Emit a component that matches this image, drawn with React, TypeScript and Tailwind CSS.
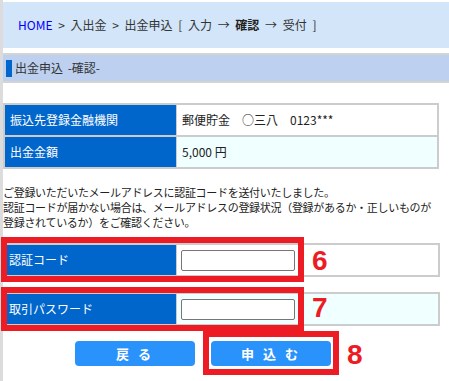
const font = "font-['Noto_Sans_CJK_JP',sans-serif]";

const InfoRow = ({ label, value, alt }: { label: string; value: string; alt?: boolean }) => (
  <div className="flex h-[30px] gap-x-px">
    <div className="w-[171px] bg-[#0066cc] text-white flex items-center pl-[5px]">{label}</div>
    <div className={`flex-1 flex items-center pl-[5px] text-[#222] ${alt ? "bg-[#f0ffff]" : "bg-white"}`}>
      {value}
    </div>
  </div>
);

const FormRow = ({ label, alt, type }: { label: string; alt?: boolean; type: string }) => (
  <div className="ml-[2px] w-[435px] border-2 border-[#cccccc] flex h-[34px]">
    <div className="w-[169px] bg-[#0066cc] text-white flex items-center pl-[2px]">{label}</div>
    <div className="w-px bg-[#cccccc]" />
    <div className={`flex-1 flex items-center pl-[4px] ${alt ? "bg-[#f0ffff]" : "bg-white"}`}>
      <input
        type={type}
        className="w-[114px] h-[21px] border border-[#767676] rounded-[2px] bg-white outline-none"
      />
    </div>
  </div>
);

const RedNum = ({ n, className }: { n: string; className: string }) => (
  <div
    className={`absolute text-[28px] leading-none font-bold text-[#ed1c24] font-['Liberation_Sans',Arial,sans-serif] ${className}`}
  >
    {n}
  </div>
);

export default function App() {
  return (
    <div className={`relative flex w-[449px] h-[381px] overflow-hidden bg-white text-[12px] ${font}`}>
      <div className="w-[3px] bg-[#dcdcdc] shrink-0" />
      <div className="flex-1 flex flex-col pt-[2px]">
        <div className="h-[46px] bg-[#d2e5f9] flex items-center pl-[15px] text-[#333] [word-spacing:3px] whitespace-pre">
          <span className="text-[#0000ff]">HOME</span>
          <span> &gt; 入出金 &gt; 出金申込 [ 入力 → </span>
          <span className="font-bold text-[#222]">確認</span>
          <span> → 受付 ]</span>
        </div>

        <div className="mt-[5px] h-[30px] border-y-2 border-[#d4d4d4] bg-[#bdd0ef] flex items-center">
          <div className="ml-[3px] w-[6px] h-[17px] bg-[#0066cc]" />
          <div className="ml-[3px] text-[#333] [word-spacing:2px]">出金申込 -確認-</div>
        </div>

        <div className="mt-[20px] w-[436px] border-2 border-[#cccccc] bg-[#cccccc] flex flex-col gap-y-[2px]">
          <InfoRow label="振込先登録金融機関" value="郵便貯金　○三八　0123***" />
          <InfoRow label="出金金額" value="5,000 円" alt />
        </div>

        <p className="mt-[16px] text-[11px] leading-[15px] tracking-[-0.3px] text-[#222] whitespace-nowrap">
          ご登録いただいたメールアドレスに認証コードを送付いたしました。
          <br />
          認証コードが届かない場合は、メールアドレスの登録状況（登録があるか・正しいものが
          <br />
          登録されているか）をご確認ください。
        </p>

        <div className="mt-[13px]">
          <FormRow label="認証コード" type="text" />
        </div>
        <div className="mt-[15px]">
          <FormRow label="取引パスワード" type="password" alt />
        </div>

        <div className="mt-[15px] ml-[72px] flex gap-[16px]">
          <button className="w-[120px] h-[25px] rounded-[4px] bg-[#2a93fb] text-white font-bold text-[13px] tracking-[3px]">
            戻 る
          </button>
          <button className="w-[120px] h-[25px] rounded-[4px] bg-[#2a93fb] text-white font-bold text-[13px] tracking-[3px]">
            申 込 む
          </button>
        </div>
      </div>

      <div className="absolute left-[1px] top-[237px] w-[303px] h-[45px] border-[6px] border-[#ed1c24]" />
      <div className="absolute left-[1px] top-[287px] w-[303px] h-[44px] border-[6px] border-[#ed1c24]" />
      <div className="absolute left-[203px] top-[331px] w-[136px] h-[44px] border-[6px] border-[#ed1c24]" />
      <RedNum n="6" className="left-[312px] top-[247px]" />
      <RedNum n="7" className="left-[312px] top-[294px]" />
      <RedNum n="8" className="left-[347px] top-[341px]" />
    </div>
  );
}
